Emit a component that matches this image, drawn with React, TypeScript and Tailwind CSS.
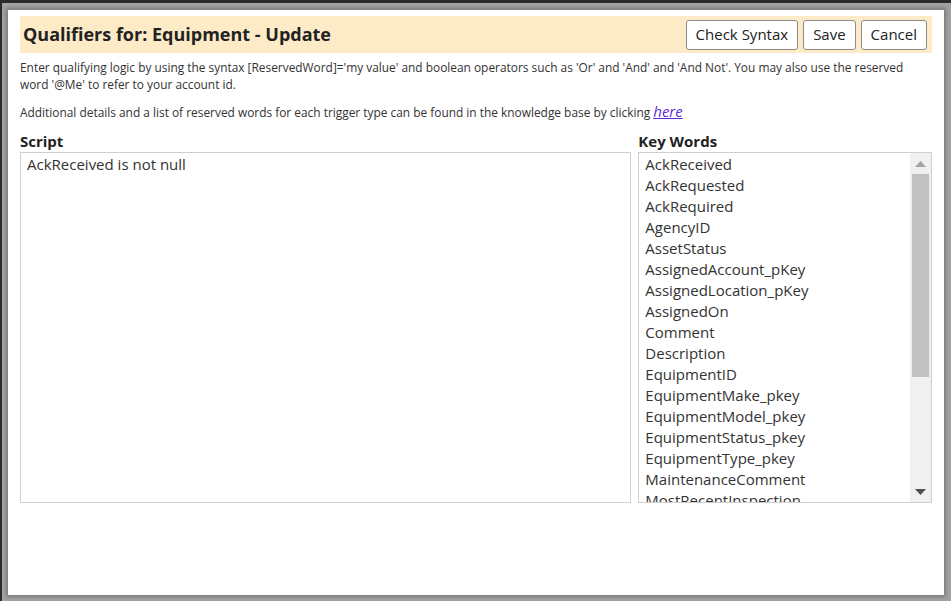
const KEY_WORDS = [
  'AckReceived',
  'AckRequested',
  'AckRequired',
  'AgencyID',
  'AssetStatus',
  'AssignedAccount_pKey',
  'AssignedLocation_pKey',
  'AssignedOn',
  'Comment',
  'Description',
  'EquipmentID',
  'EquipmentMake_pkey',
  'EquipmentModel_pkey',
  'EquipmentStatus_pkey',
  'EquipmentType_pkey',
  'MaintenanceComment',
  'MostRecentInspection',
  'Name',
  'SerialNumber',
]

function HeaderButton({ label }: { label: string }) {
  return (
    <button className="h-[30px] px-[9px] bg-white border border-[#8c8c8c] rounded-[3px] text-[15px] text-[#222] leading-none">
      {label}
    </button>
  )
}

export default function App() {
  return (
    <div className="w-[951px] h-[601px] bg-[#a3a3a3] border-t-[3px] border-l-[2px] border-[#2b2b2b] overflow-hidden font-['Open_Sans',sans-serif]">
      <div className="ml-[6px] mt-[7px] w-[936px] h-[585px] bg-white shadow-[0_0_4px_2px_rgba(0,0,0,0.25)] px-[12px] pt-[6px]">
        {/* Title band */}
        <div className="h-[37px] bg-[#fdeac7] flex items-center justify-between pl-[3px] pr-[5px]">
          <h1 className="text-[18px] font-bold text-[#222]">Qualifiers for: Equipment - Update</h1>
          <div className="flex gap-[5px]">
            <HeaderButton label="Check Syntax" />
            <HeaderButton label="Save" />
            <HeaderButton label="Cancel" />
          </div>
        </div>

        <p className="mt-[6px] text-[11.9px] leading-[17px] text-[#333] pr-[20px]">
          Enter qualifying logic by using the syntax [ReservedWord]='my value' and boolean operators such as 'Or' and
          'And' and 'And Not'. You may also use the reserved word '@Me' to refer to your account id.
        </p>
        <p className="mt-[10px] text-[11.9px] leading-[17px] text-[#333]">
          Additional details and a list of reserved words for each trigger type can be found in the knowledge base by
          clicking{' '}
          <a href="#" className="italic underline text-[15px] text-[#5b2bd9]">
            here
          </a>
        </p>

        <div className="mt-[9px] flex gap-[7px]">
          <div className="w-[612px]">
            <div className="text-[15px] font-bold text-[#222] leading-[22px]">Script</div>
            <div className="h-[351px] border border-[#cfcfcf] px-[6px] pt-[1px] text-[15px] leading-[21px] text-[#333]">
              AckReceived is not null
            </div>
          </div>
          <div className="w-[294px]">
            <div className="text-[15px] font-bold text-[#222] leading-[22px]">Key Words</div>
            <div className="h-[351px] border border-[#cfcfcf] flex overflow-hidden">
              <ul className="flex-1 overflow-hidden px-[6px] pt-[1px] text-[15px] leading-[21px] text-[#333]">
                {KEY_WORDS.map((word) => (
                  <li key={word} className="whitespace-nowrap">
                    {word}
                  </li>
                ))}
              </ul>
              {/* Scrollbar */}
              <div className="w-[21px] bg-[#f0f0f0] flex flex-col items-center">
                <div className="h-[21px] flex items-center justify-center">
                  <svg width="11" height="6" viewBox="0 0 11 6">
                    <path d="M5.5 0L11 6H0z" fill="#a3a3a3" />
                  </svg>
                </div>
                <div className="w-[17px] h-[203px] bg-[#c1c1c1]" />
                <div className="flex-1" />
                <div className="h-[21px] flex items-center justify-center">
                  <svg width="11" height="6" viewBox="0 0 11 6">
                    <path d="M0 0H11L5.5 6z" fill="#505050" />
                  </svg>
                </div>
              </div>
            </div>
          </div>
        </div>
      </div>
    </div>
  )
}
